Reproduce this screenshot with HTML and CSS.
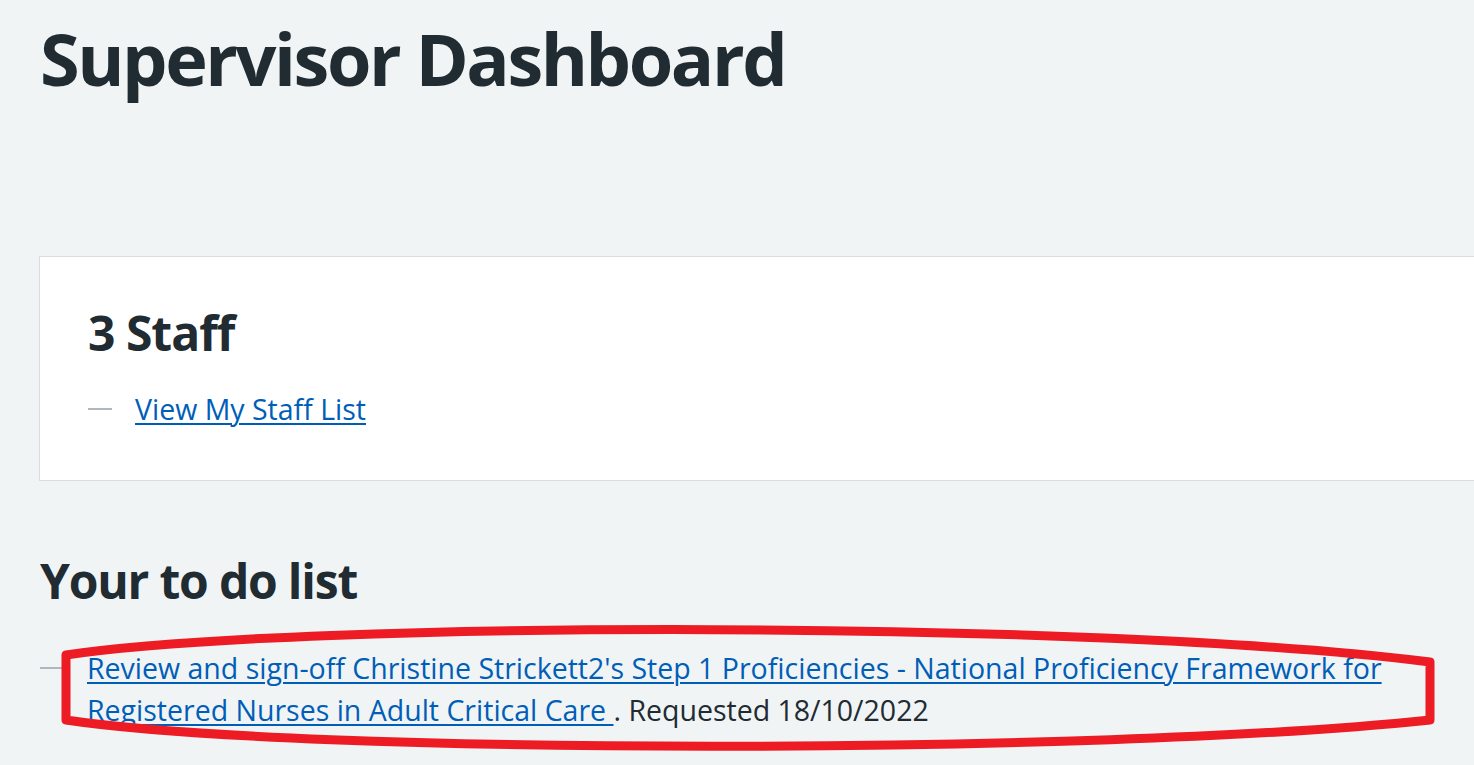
FILE: index.html
```html
<!DOCTYPE html>
<html lang="en">
<head>
<meta charset="utf-8">
<title>Supervisor Dashboard</title>
<link rel="stylesheet" href="styles.css">
</head>
<body>
<main class="page">
  <h1 class="title">Supervisor Dashboard</h1>
  <section class="card">
    <h2 class="card-title">3 Staff</h2>
    <ul class="dash-list">
      <li><a href="#">View My Staff List</a></li>
    </ul>
  </section>
  <h2 class="section-title">Your to do list</h2>
  <div class="todo">
    <ul class="dash-list">
      <li><a href="#">Review and sign-off Christine Strickett2's Step 1 Proficiencies - National Proficiency Framework for Registered Nurses in Adult Critical Care </a>. Requested 18/10/2022</li>
    </ul>
  </div>
</main>
<svg class="annotation" width="1474" height="765" viewBox="0 0 1474 765" aria-hidden="true">
  <path d="M66,655 C300,620 1100,620 1430,662 L1430,720 C1100,755 300,755 66,720 Z" fill="none" stroke="#ed1c24" stroke-width="9" stroke-linejoin="round"/>
</svg>
</body>
</html>
```

FILE: styles.css
```css
html, body {
  margin: 0;
  padding: 0;
}
body {
  background: #f0f4f5;
  color: #212b32;
  font-family: "Open Sans", "Noto Sans", sans-serif;
  font-size: 28.5px;
  line-height: 42px;
  overflow: hidden;
  width: 1474px;
  height: 765px;
}
.page {
  padding: 16px 0 0 40px;
}
.title {
  font-size: 72px;
  line-height: 84px;
  font-weight: 700;
  margin: 0;
  letter-spacing: -2.45px;
}
.card {
  box-sizing: border-box;
  width: 1500px;
  height: 225px;
  margin-top: 156px;
  margin-left: -1px;
  background: #ffffff;
  border: 1px solid #d8dde0;
  padding: 46px 48px;
}
.card-title {
  font-size: 48px;
  line-height: 60px;
  font-weight: 700;
  margin: 0 0 25px 0;
  letter-spacing: -1px;
}
.section-title {
  font-size: 48px;
  line-height: 60px;
  font-weight: 700;
  margin: 70px 0 36px 0;
  letter-spacing: -1.2px;
}
.dash-list {
  list-style: none;
  margin: 0;
  padding: 0;
}
.dash-list li {
  position: relative;
  padding-left: 47px;
}
.dash-list li::before {
  content: "";
  position: absolute;
  left: 0;
  top: 20px;
  width: 24px;
  height: 2px;
  background: #aeb7bd;
}
a {
  color: #005eb8;
  text-decoration: underline;
  text-underline-offset: 3px;
  text-decoration-thickness: 2px;
}
.todo {
  max-width: 1360px;
}
.annotation {
  position: absolute;
  left: 0;
  top: 0;
  pointer-events: none;
}
```
